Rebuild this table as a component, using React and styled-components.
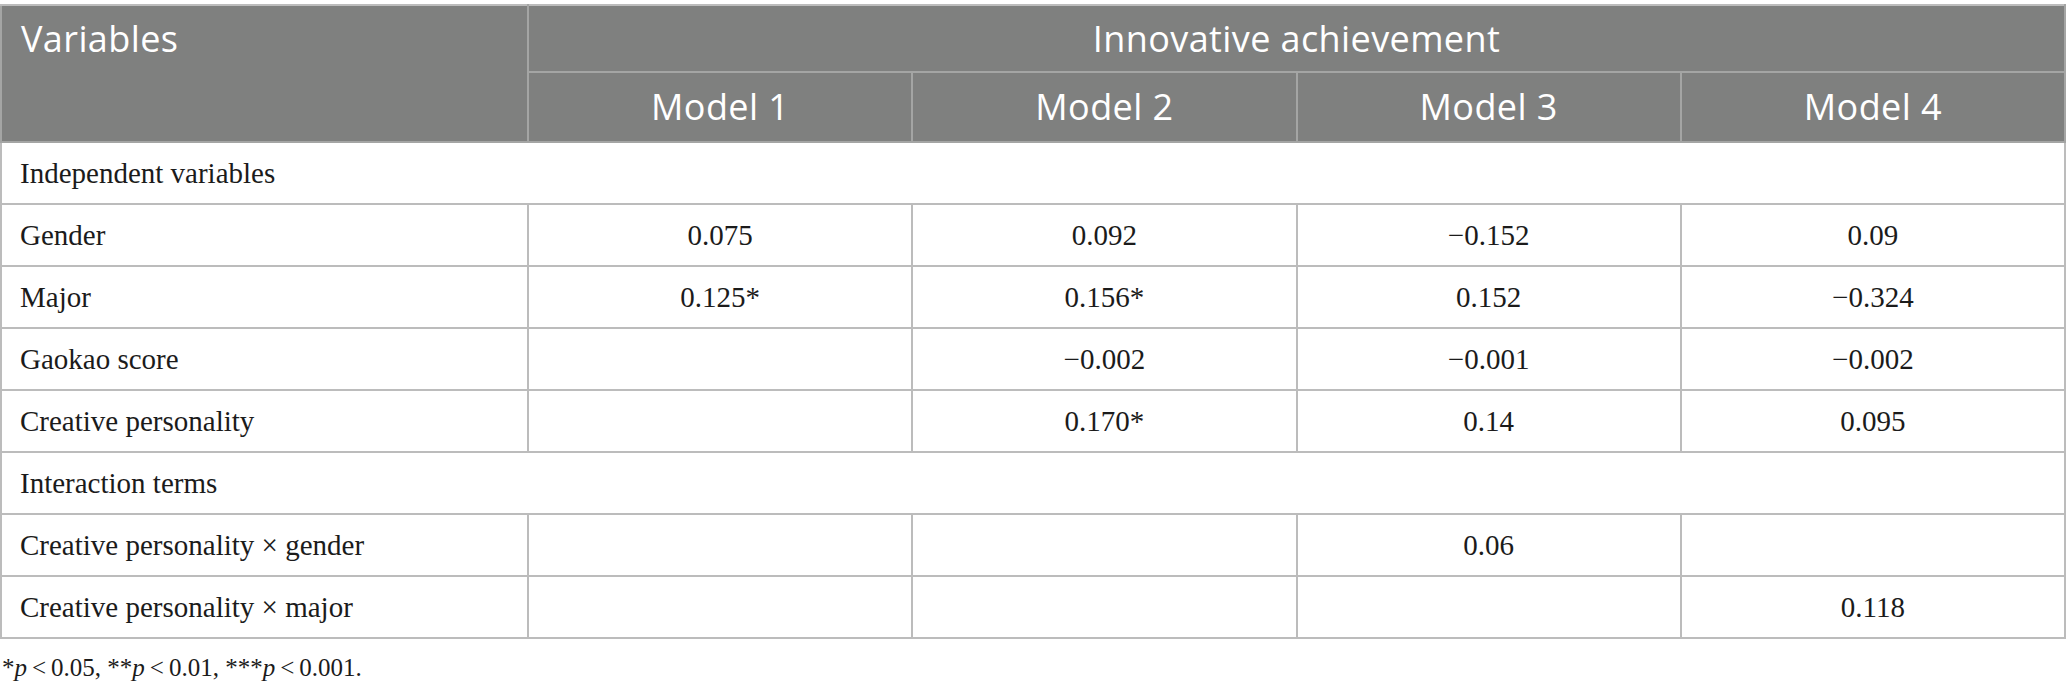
import React from 'react'
import styled, {createGlobalStyle} from 'styled-components'

const GlobalStyle = createGlobalStyle`
    body {
        margin: 0;
        background: #fff;
    }
`

const rows = [
    {section: 'Independent variables'},
    {label: 'Gender', values: ['0.075', '0.092', '\u22120.152', '0.09']},
    {label: 'Major', values: ['0.125*', '0.156*', '0.152', '\u22120.324']},
    {label: 'Gaokao score', values: ['', '\u22120.002', '\u22120.001', '\u22120.002']},
    {label: 'Creative personality', values: ['', '0.170*', '0.14', '0.095']},
    {section: 'Interaction terms'},
    {label: 'Creative personality \u00d7 gender', values: ['', '', '0.06', '']},
    {label: 'Creative personality \u00d7 major', values: ['', '', '', '0.118']},
]

const App = () => {
    return (
        <Page>
            <GlobalStyle />
            <Table>
                <colgroup>
                    <col style={{width: 527}} />
                    <col />
                    <col />
                    <col />
                    <col />
                </colgroup>
                <thead>
                    <HeadRow>
                        <HeadCell rowSpan={2} $left>Variables</HeadCell>
                        <HeadCell colSpan={4}>Innovative achievement</HeadCell>
                    </HeadRow>
                    <HeadRow $second>
                        <HeadCell>Model 1</HeadCell>
                        <HeadCell>Model 2</HeadCell>
                        <HeadCell>Model 3</HeadCell>
                        <HeadCell>Model 4</HeadCell>
                    </HeadRow>
                </thead>
                <tbody>
                    {rows.map((row, i) => row.section ? (
                        <BodyRow key={i}>
                            <Cell colSpan={5} $left>{row.section}</Cell>
                        </BodyRow>
                    ) : (
                        <BodyRow key={i}>
                            <Cell $left>{row.label}</Cell>
                            {row.values.map((v, j) => <Cell key={j}>{v}</Cell>)}
                        </BodyRow>
                    ))}
                </tbody>
            </Table>
            <Footnote>
                *<i>p</i>{'\u2009<\u2009'}0.05, **<i>p</i>{'\u2009<\u2009'}0.01, ***<i>p</i>{'\u2009<\u2009'}0.001.
            </Footnote>
        </Page>
    )
}

export default App

const Page = styled.div`
    padding-top: 4px;
    width: 2066px;
`

const Table = styled.table`
    width: 2066px;
    border-collapse: collapse;
    table-layout: fixed;
    border: 2px solid #bcbcbc;
`

const HeadRow = styled.tr`
    height: ${p => p.$second ? '70px' : '67px'};
    background: #7f807f;
`

const HeadCell = styled.th`
    font-family: "Open Sans", Lato, sans-serif;
    font-weight: 400;
    font-size: 36px;
    letter-spacing: 0.4px;
    line-height: 1.2;
    color: #fff;
    text-align: ${p => p.$left ? 'left' : 'center'};
    vertical-align: ${p => p.$left ? 'top' : 'middle'};
    padding: ${p => p.$left ? '11px 19px' : '0 10px'};
    border: 2px solid #a4a5a4;
    border-top-color: #bcbcbc;
`

const BodyRow = styled.tr`
    height: 62px;
`

const Cell = styled.td`
    font-family: "Liberation Serif", "Times New Roman", serif;
    font-size: 29px;
    color: #1b1b1b;
    text-align: ${p => p.$left ? 'left' : 'center'};
    padding: ${p => p.$left ? '0 18px' : '0 10px'};
    border: 2px solid #bcbcbc;
`

const Footnote = styled.div`
    font-family: "Liberation Serif", "Times New Roman", serif;
    font-size: 25px;
    color: #1b1b1b;
    margin-top: 15px;
    padding-left: 2px;
`
